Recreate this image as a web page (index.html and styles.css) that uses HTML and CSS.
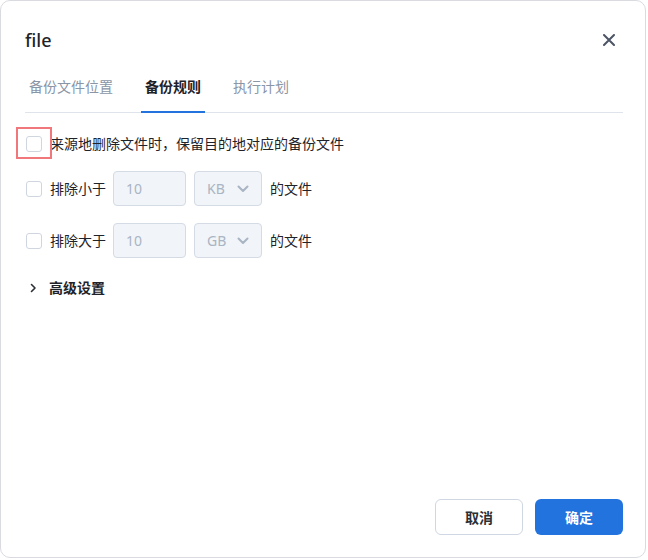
FILE: index.html
```html
<!DOCTYPE html>
<html lang="zh-CN">
<head>
    <meta charset="UTF-8">
    <meta name="viewport" content="width=device-width, initial-scale=1.0">
    <title>file</title>
    <link rel="stylesheet" href="styles.css">
</head>
<body>
    <div class="dialog">
        <div class="dialog-header">
            <h2 class="dialog-title">file</h2>
            <button class="close-btn" aria-label="close">
                <svg width="12" height="12" viewBox="0 0 12 12">
                    <path d="M1 1L11 11M11 1L1 11" stroke="#4b5565" stroke-width="2" stroke-linecap="round"/>
                </svg>
            </button>
        </div>

        <div class="tabs">
            <div class="tab">备份文件位置</div>
            <div class="tab active">备份规则</div>
            <div class="tab">执行计划</div>
        </div>

        <div class="rules">
            <div class="rule rule-first">
                <span class="checkbox-wrap">
                    <span class="checkbox"></span>
                    <span class="highlight"></span>
                </span>
                <span class="rule-text">来源地删除文件时，保留目的地对应的备份文件</span>
            </div>

            <div class="rule">
                <span class="checkbox"></span>
                <span class="rule-text">排除小于</span>
                <div class="field">10</div>
                <div class="select">
                    <span>KB</span>
                    <svg width="12" height="8" viewBox="0 0 12 8">
                        <path d="M1.5 1.5L6 6L10.5 1.5" fill="none" stroke="#a9b4c4" stroke-width="2" stroke-linecap="round" stroke-linejoin="round"/>
                    </svg>
                </div>
                <span class="rule-text">的文件</span>
            </div>

            <div class="rule">
                <span class="checkbox"></span>
                <span class="rule-text">排除大于</span>
                <div class="field">10</div>
                <div class="select">
                    <span>GB</span>
                    <svg width="12" height="8" viewBox="0 0 12 8">
                        <path d="M1.5 1.5L6 6L10.5 1.5" fill="none" stroke="#a9b4c4" stroke-width="2" stroke-linecap="round" stroke-linejoin="round"/>
                    </svg>
                </div>
                <span class="rule-text">的文件</span>
            </div>

            <div class="advanced">
                <svg class="arrow" width="10" height="10" viewBox="0 0 10 10">
                    <path d="M3.5 1.5L7 5L3.5 8.5" fill="none" stroke="#2b2f36" stroke-width="1.6" stroke-linecap="round" stroke-linejoin="round"/>
                </svg>
                <span>高级设置</span>
            </div>
        </div>

        <div class="dialog-footer">
            <button class="btn btn-default">取消</button>
            <button class="btn btn-primary">确定</button>
        </div>
    </div>
</body>
</html>
```

FILE: styles.css
```css
body {
    margin: 0;
    background: #ffffff;
    font-family: "Noto Sans", "Noto Sans CJK SC", sans-serif;
    color: #1f2329;
}

.dialog {
    box-sizing: border-box;
    width: 646px;
    height: 558px;
    border: 1px solid #d9dbe0;
    border-radius: 10px;
    background: #fff;
    padding: 0 22px 22px 24px;
    display: flex;
    flex-direction: column;
}

.dialog-header {
    display: flex;
    align-items: center;
    justify-content: space-between;
    padding-top: 27px;
}

.dialog-title {
    margin: 0;
    font-size: 18px;
    font-weight: 500;
    line-height: 24px;
    color: #1f2329;
}

.close-btn {
    width: 20px;
    height: 20px;
    margin-right: 4px;
    padding: 0;
    border: none;
    background: none;
    display: flex;
    align-items: center;
    justify-content: center;
    cursor: pointer;
}

/* tabs */
.tabs {
    display: flex;
    gap: 24px;
    margin-top: 24px;
    border-bottom: 1px solid #dfe3ea;
}

.tab {
    padding: 0 4px 13px;
    font-size: 14px;
    line-height: 22px;
    color: #8a95a6;
    border-bottom: 2px solid transparent;
    margin-bottom: -1px;
}

.tab.active {
    color: #1f2329;
    font-weight: 700;
    border-bottom-color: #2273de;
}

/* rules */
.rules {
    display: flex;
    flex-direction: column;
}

.rule {
    display: flex;
    align-items: center;
    height: 35px;
    margin-top: 17px;
    font-size: 14px;
}

.rule-first {
    height: 34px;
    margin-top: 14px;
    margin-bottom: -7px;
}

.checkbox-wrap {
    position: relative;
    display: flex;
}

.checkbox {
    box-sizing: border-box;
    width: 16px;
    height: 16px;
    margin-left: 1px;
    border: 1px solid #cfd6e0;
    border-radius: 3px;
    background: #fff;
    flex-shrink: 0;
}

.highlight {
    position: absolute;
    left: -9px;
    top: -9px;
    width: 36px;
    height: 32px;
    box-sizing: border-box;
    border: 2px solid #f0777a;
}

.rule-text {
    margin-left: 8px;
    line-height: 22px;
}

.field {
    box-sizing: border-box;
    width: 73px;
    height: 35px;
    margin-left: 7px;
    padding-left: 12px;
    border: 1px solid #d4dbe5;
    border-radius: 4px;
    background: #f1f4f8;
    color: #a9b4c4;
    line-height: 33px;
}

.select {
    box-sizing: border-box;
    width: 68px;
    height: 35px;
    margin-left: 8px;
    padding: 0 12px;
    border: 1px solid #d4dbe5;
    border-radius: 4px;
    background: #f1f4f8;
    color: #a9b4c4;
    display: flex;
    align-items: center;
    justify-content: space-between;
}

.advanced {
    display: flex;
    align-items: center;
    margin-top: 19px;
    font-size: 14px;
    font-weight: 700;
    line-height: 22px;
}

.arrow {
    margin-left: 3px;
    margin-right: 11px;
}

/* footer */
.dialog-footer {
    margin-top: auto;
    display: flex;
    justify-content: flex-end;
    gap: 12px;
}

.btn {
    box-sizing: border-box;
    width: 88px;
    height: 36px;
    border-radius: 6px;
    font-family: inherit;
    font-size: 14px;
    font-weight: 700;
    cursor: pointer;
}

.btn-default {
    background: #fff;
    color: #2b2f36;
    border: 1px solid #cfd7e2;
}

.btn-primary {
    background: #2273de;
    color: #fff;
    border: none;
}
```
